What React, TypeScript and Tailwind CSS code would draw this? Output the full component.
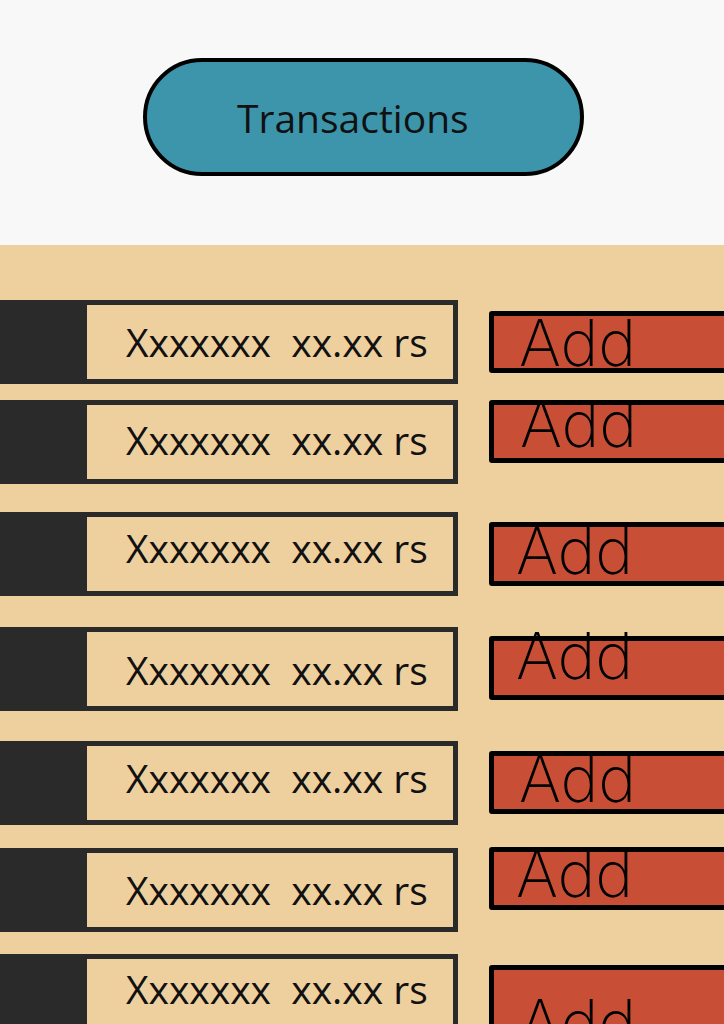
const rows = [
  { row: "mt-0", label: "pt-[17px]", add: "mt-[11px] h-[62px]", text: "-mt-[5px] pl-[25px]" },
  { row: "mt-[16px]", label: "pt-[15px]", add: "mt-0 h-[63px]", text: "-mt-[13px] pl-[26px]" },
  { row: "mt-[28px]", label: "pt-[11px]", add: "mt-[10px] h-[64px]", text: "-mt-[8px] pl-[22px]" },
  { row: "mt-[31px]", label: "pt-[18px]", add: "mt-[9px] h-[64px]", text: "-mt-[17px] pl-[22px]" },
  { row: "mt-[30px]", label: "pt-[12px]", add: "mt-[10px] h-[63px]", text: "-mt-[9px] pl-[25px]" },
  { row: "mt-[23px]", label: "pt-[17px]", add: "-mt-[1px] h-[63px]", text: "-mt-[10px] pl-[22px]" },
  { row: "mt-[22px]", label: "pt-[10px]", add: "mt-[11px] h-[64px]", text: "mt-[21px] pl-[25px]" },
];

const App = () => {
  return (
    <div className="w-[724px] h-[1024px] overflow-hidden bg-[#eecf9e] font-['Open_Sans',sans-serif]">
      <header className="h-[245px] bg-[#f8f8f8] flex justify-center pt-[58px]">
        <div className="ml-[3px] w-[441px] h-[118px] rounded-full border-4 border-black bg-[#3c95ab] flex items-center pl-[90px]">
          <span className="text-[39px] leading-none text-[#111]">Transactions</span>
        </div>
      </header>

      <main className="pt-[55px] flex flex-col">
        {rows.map((r, i) => (
          <div key={i} className={`flex items-start ${r.row}`}>
            <div className="w-[458px] h-[84px] shrink-0 border-[5px] border-[#2a2a2a] flex">
              <div className="w-[82px] bg-[#2a2a2a]" />
              <div className={`flex-1 pl-[39px] ${r.label}`}>
                <span className="text-[39px] leading-none whitespace-pre text-[#111]">Xxxxxxx  xx.xx rs</span>
              </div>
            </div>
            <div className={`ml-[31px] w-[260px] shrink-0 border-[5px] border-black rounded-[3px] bg-[#c84f35] flex items-start ${r.add}`}>
              <span className={`font-['Inter',sans-serif] font-extralight text-[64px] leading-none text-black ${r.text}`}>
                Add
              </span>
            </div>
          </div>
        ))}
      </main>
    </div>
  );
};

export default App;
